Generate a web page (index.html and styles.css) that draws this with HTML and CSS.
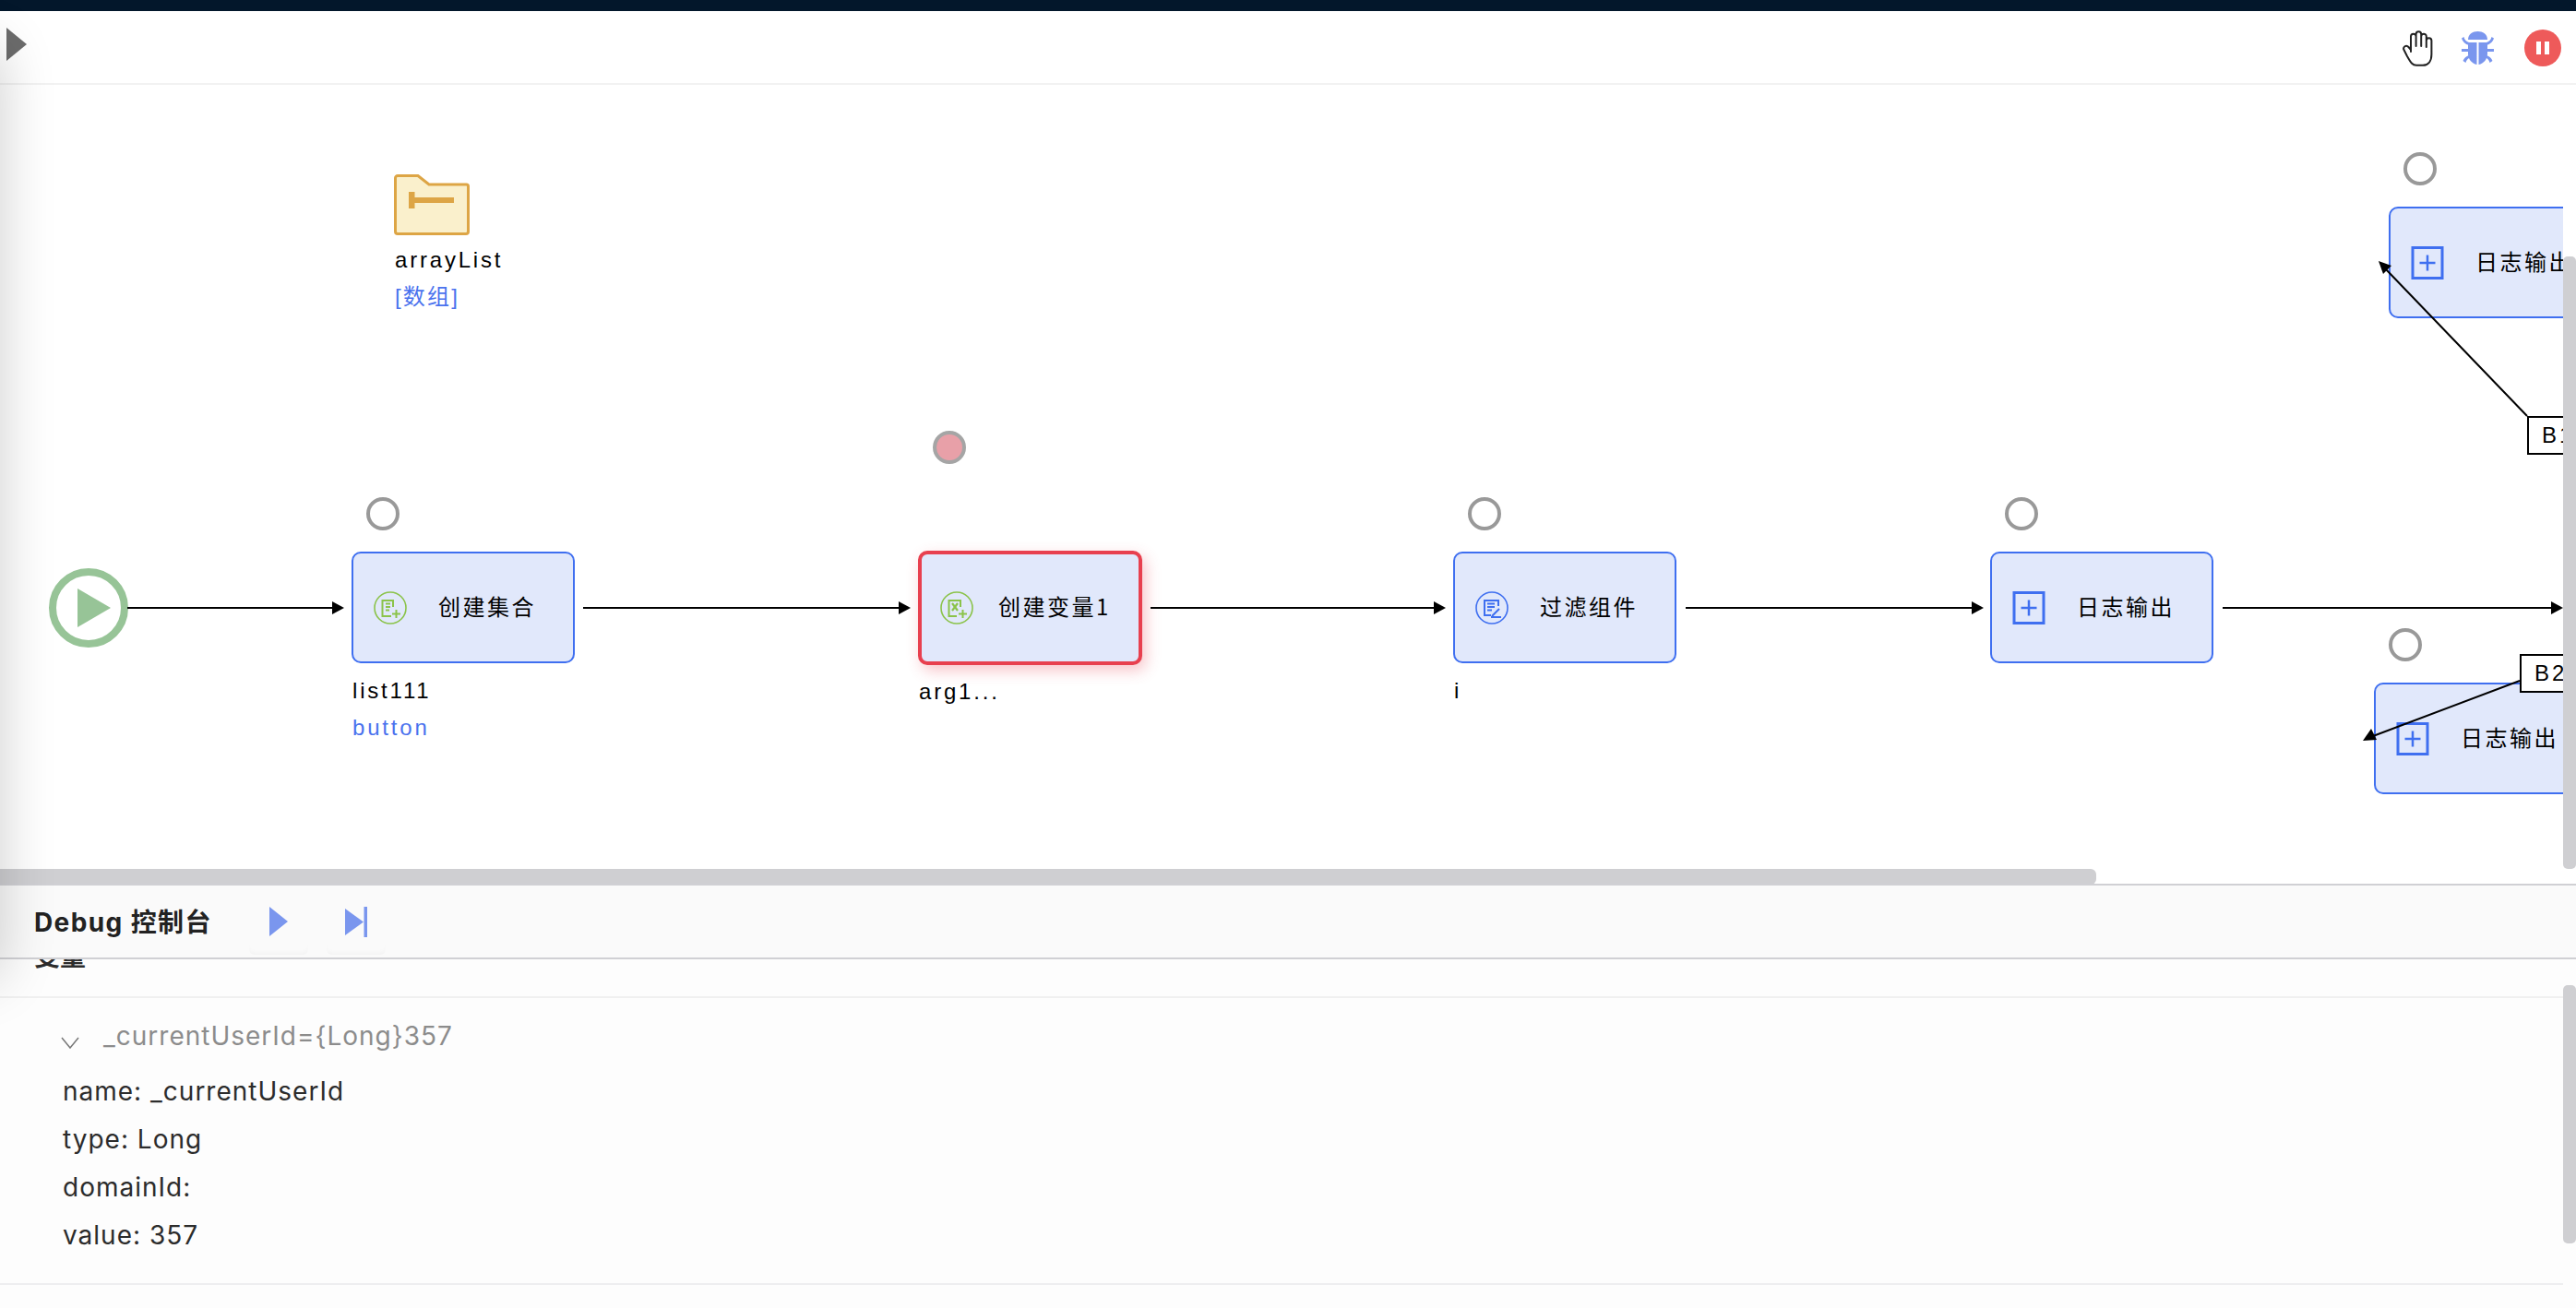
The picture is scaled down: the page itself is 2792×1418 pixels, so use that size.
FILE: index.html
```html
<!DOCTYPE html>
<html lang="zh">
<head>
<meta charset="utf-8">
<title>Debug</title>
<link rel="stylesheet" href="styles.css">
</head>
<body>
<div class="page">
  <div class="topbar"></div>
  <div class="toolbar">
    <svg class="tb-toggle" width="22" height="36" viewBox="0 0 22 36"><polygon points="0,0 22,18 0,36" fill="#6c6c6c"/></svg>
    <div class="tb-actions">
      <svg width="36" height="39" viewBox="0 0 36 39" fill="none" stroke="#222" stroke-width="2" stroke-linecap="round" stroke-linejoin="round"><path d="M9 23V6.5a2.8 2.8 0 0 1 5.6 0V17M14.6 17V4a2.8 2.8 0 0 1 5.6 0V17M20.2 17V6.5a2.8 2.8 0 0 1 5.6 0V18M25.8 18V11a2.8 2.8 0 0 1 5.6 0V26C31.4 33 28 37.8 22 37.8H15C10 37.8 8 33 5 28L1.5 21C0 18 4 15 6.5 18L9 21"/></svg>
      <svg width="40" height="36" viewBox="0 0 40 36" fill="#7a96ee"><path d="M7 9C7 3 12 0 17.500 0S28 3 28 9Z"/><path d="M7 12H16.500V36C11 35 7 30 7 24Z"/><path d="M18.500 12H28V24C28 30 24 35 18.500 36Z"/><path d="M0 7.500L2.500 6C3 9 5 11 8 12V15C4 14 1 11 0 7.500ZM35 7.500L32.500 6C32 9 30 11 27 12V15C31 14 34 11 35 7.500ZM0 19H8V22H0ZM27 19H35V22H27ZM8 26V29C6 30 5 32 4.500 34L1.500 32C2.500 29 5 27 8 26ZM27 26V29C29 30 30 32 30.500 34L33.500 32C32.500 29 30 27 27 26Z"/></svg>
      <div class="pause"><span class="pause-bar"></span><span class="pause-bar"></span></div>
    </div>
  </div>

  <div class="canvas-wrap">
    <div class="canvas">
      <div class="node n1">
        <svg class="nico" width="36" height="36" viewBox="-18 -18 36 36" fill="none" stroke="#8bc34a" stroke-width="2"><circle r="17" stroke-width="1.600"/><path d="M3-1V-8H-8.500V9H1"/><path d="M-5-4.500H0M-5-1H0M-5 2.500H-1"/><path d="M2 6.500H11M6.500 2V11"/></svg>
        <span class="ntext">创建集合</span>
      </div>
      <div class="node n2">
        <svg class="nico" width="36" height="36" viewBox="-18 -18 36 36" fill="none" stroke="#8bc34a" stroke-width="2"><circle r="17" stroke-width="1.600"/><path d="M4-1V-8H-8.500V9H0"/><path d="M-5-5L1 3M1-5L-5 3" stroke-width="2.200"/><path d="M2 6.500H11M6.500 2V11"/></svg>
        <span class="ntext">创建变量1</span>
      </div>
      <div class="node n3">
        <svg class="nico" width="36" height="36" viewBox="-18 -18 36 36" fill="none" stroke="#3f6ff0" stroke-width="2"><circle r="17" stroke-width="1.600"/><path d="M7-2V-8H-8V8H-1"/><path d="M-5-4.500H3M-5-1H3M-5 2.500H0"/><path d="M0 9L8 1M-1 10H10"/></svg>
        <span class="ntext">过滤组件</span>
      </div>
      <div class="node n4">
        <svg class="nico" width="36" height="36" viewBox="-18 -18 36 36" fill="none" stroke="#3f6ff0"><rect x="-16" y="-16.500" width="32" height="33" stroke-width="3"/><path d="M-8.500 0H8.500M0-8.500V8.500" stroke-width="2.500"/></svg>
        <span class="ntext">日志输出</span>
      </div>
      <div class="node n5">
        <svg class="nico" width="36" height="36" viewBox="-18 -18 36 36" fill="none" stroke="#3f6ff0"><rect x="-16" y="-16.500" width="32" height="33" stroke-width="3"/><path d="M-8.500 0H8.500M0-8.500V8.500" stroke-width="2.500"/></svg>
        <span class="ntext">日志输出</span>
      </div>
      <div class="node n6">
        <svg class="nico" width="36" height="36" viewBox="-18 -18 36 36" fill="none" stroke="#3f6ff0"><rect x="-16" y="-16.500" width="32" height="33" stroke-width="3"/><path d="M-8.500 0H8.500M0-8.500V8.500" stroke-width="2.500"/></svg>
        <span class="ntext">日志输出</span>
      </div>

      <svg class="edges" width="2778" height="866" viewBox="0 92 2778 866">
        <!-- folder -->
        <g transform="translate(427 189)">
          <path d="M1.500 4A2.500 2.500 0 0 1 4 1.500H26L38 11H78.500A2 2 0 0 1 80.500 13V62A2.500 2.500 0 0 1 78 64.500H4A2.500 2.500 0 0 1 1.500 62Z" fill="#faf0cc" stroke="#dda545" stroke-width="3"/>
          <path d="M16 19H22.500V25H65V31H22.500V37H16Z" fill="#dda545"/>
        </g>
        <!-- start -->
        <circle cx="96" cy="659" r="39" fill="#fff" stroke="#97c497" stroke-width="8"/>
        <polygon points="84,638 120,659 84,680" fill="#97c497"/>
        <!-- breakpoints -->
        <g fill="none" stroke="#999" stroke-width="4">
          <circle cx="415" cy="557" r="16"/>
          <circle cx="1029" cy="485" r="16" fill="#e8a0a8" stroke="#a5a5a5"/>
          <circle cx="1609" cy="557" r="16"/>
          <circle cx="2191" cy="557" r="16"/>
          <circle cx="2623" cy="183" r="16"/>
          <circle cx="2607" cy="699" r="16"/>
        </g>
        <!-- edges -->
        <g stroke="#000" stroke-width="2" fill="none">
          <path d="M138 659H364M632 659H978M1247 659H1558M1827 659H2142M2409 659H2770"/>
          <path d="M2739 451L2586 292M2731 738L2572 798"/>
        </g>
        <g fill="#000">
          <polygon points="373,659 360,652 360,666"/>
          <polygon points="987,659 974,652 974,666"/>
          <polygon points="1567,659 1554,652 1554,666"/>
          <polygon points="2150,659 2137,652 2137,666"/>
          <polygon points="2778,659 2765,652 2765,666"/>
          <polygon points="2578,283 2592,288 2583,297"/>
          <polygon points="2561,803 2570,790 2576,802"/>
        </g>
      </svg>

      <span class="lbl l-array">arrayList</span>
      <span class="lbl lbl-blue l-arraytype">[数组]</span>
      <span class="lbl l-list">list111</span>
      <span class="lbl lbl-blue l-button">button</span>
      <span class="lbl l-arg">arg1...</span>
      <span class="lbl l-i">i</span>
      <span class="branch b1">B1</span>
      <span class="branch b2">B2</span>
    </div>
    <div class="sb-h"></div>
  </div>
  <div class="sb-v sb-v1"></div>

  <div class="debug">
    <div class="debug-head">
      <span class="debug-title">Debug 控制台</span>
      <div class="debug-btn"><svg width="20" height="32" viewBox="0 0 20 32"><polygon points="0,0 20,16 0,32" fill="#7a96ee"/></svg></div>
      <div class="debug-btn"><svg width="24" height="33" viewBox="0 0 24 33" fill="#7a96ee"><polygon points="0,2 20,16.500 0,31"/><rect x="20.500" width="3.500" height="33"/></svg></div>
    </div>
    <div class="section-head"><div class="section-title">变量</div></div>
    <div class="var">
      <div class="var-summary">
        <svg class="chev" width="20" height="13" viewBox="0 0 20 13" fill="none" stroke="#777" stroke-width="1.500"><path d="M1 1L10 12L19 1"/></svg>
        <span>_currentUserId={Long}357</span>
      </div>
      <div class="var-row">name: _currentUserId</div>
      <div class="var-row">type: Long</div>
      <div class="var-row">domainId:</div>
      <div class="var-row">value: 357</div>
    </div>
    <div class="sb-v sb-v2"></div>
  </div>
  <div class="edge-shade"></div>
</div>
</body>
</html>
```

FILE: styles.css
```css
* { box-sizing: border-box; }
html, body { margin: 0; padding: 0; background: #fff; }
.page {
  position: relative;
  width: 2792px;
  height: 1418px;
  overflow: hidden;
  display: flex;
  flex-direction: column;
  font-family: "Liberation Sans", "Noto Sans CJK SC", sans-serif;
}
.topbar { height: 12px; background: #03172b; flex: none; }
.toolbar {
  height: 80px;
  flex: none;
  display: flex;
  align-items: center;
  justify-content: space-between;
  padding: 0 16px 6px 7px;
  border-bottom: 2px solid #f2f2f2;
  background: #fff;
}
.tb-actions { display: flex; align-items: center; gap: 28px; margin-top: 8px; }
.pause {
  width: 40px;
  height: 40px;
  border-radius: 50%;
  background: #ee5a5a;
  display: flex;
  align-items: center;
  justify-content: center;
  gap: 4px;
}
.pause-bar { width: 5px; height: 14px; background: #fff; }

.canvas-wrap { position: relative; height: 866px; flex: none; overflow: hidden; }
.canvas { position: relative; width: 2778px; height: 866px; overflow: hidden; }
.edges { position: absolute; left: 0; top: 0; z-index: 2; }

.node {
  position: absolute;
  width: 242px;
  height: 121px;
  display: flex;
  align-items: center;
  background: #e1e8fb;
  border: 2px solid #3f6ff0;
  border-radius: 10px;
  padding-left: 22px;
  z-index: 1;
}
.nico { flex: none; margin-right: 34px; }
.ntext {
  font-family: "Noto Sans CJK SC", "Liberation Sans", sans-serif;
  font-size: 24px;
  letter-spacing: 2.500px;
  color: #000;
  white-space: nowrap;
  line-height: 1;
  margin-top: -4px;
}
.n1 { left: 381px; top: 506px; }
.n2 {
  left: 995px; top: 505px; width: 243px; height: 124px;
  border: 4px solid #e8404f;
  padding-left: 20px;
  box-shadow: 4px 6px 16px rgba(232, 64, 79, .3);
}
.n2 .nico { margin-right: 27px; }
.n3 { left: 1575px; top: 506px; }
.n4 { left: 2157px; top: 506px; }
.n5 { left: 2589px; top: 132px; }
.n6 { left: 2573px; top: 648px; }

.lbl {
  position: absolute;
  z-index: 3;
  font-size: 24px;
  line-height: 30px;
  letter-spacing: 2.800px;
  color: #000;
  white-space: nowrap;
}
.lbl-blue { color: #4a72ee; }
.l-array { left: 428px; top: 175px; }
.l-arraytype { left: 428px; top: 215px; letter-spacing: 2.200px; }
.l-list { left: 382px; top: 642px; }
.l-button { left: 382px; top: 682px; }
.l-arg { left: 996px; top: 643px; }
.l-i { left: 1576px; top: 642px; }

.branch {
  position: absolute;
  z-index: 3;
  width: 60px;
  height: 42px;
  background: #fff;
  border: 2px solid #000;
  font-size: 24px;
  line-height: 38px;
  letter-spacing: 3px;
  padding-left: 14px;
  color: #000;
}
.b1 { left: 2739px; top: 359px; }
.b2 { left: 2731px; top: 617px; }

.sb-h {
  position: absolute;
  left: -6px;
  top: 850px;
  width: 2278px;
  height: 17px;
  background: #cfcfd2;
  border-radius: 6px;
  z-index: 4;
}
.sb-v { position: absolute; right: 0; width: 14px; background: #cfcfd2; border-radius: 5px; z-index: 5; }
.sb-v1 { top: 278px; height: 664px; }
.sb-v2 { top: 110px; height: 280px; }

.debug {
  position: relative;
  flex: 1;
  background: #fdfdfd;
  font-family: Inter, "Noto Sans CJK SC", sans-serif;
  color: #2c2c2c;
  overflow: hidden;
}
.debug-head {
  position: relative;
  z-index: 2;
  height: 82px;
  display: flex;
  align-items: center;
  padding-left: 37px;
  background: #fafafa;
  border-top: 2px solid #d0d0d4;
  border-bottom: 2px solid #d0d0d4;
}
.debug-title { font-size: 28px; font-weight: 700; letter-spacing: 1.400px; color: #222; width: 233px; white-space: nowrap; margin-top: -2px; }
.debug-btn {
  width: 64px;
  height: 72px;
  margin-right: 20px;
  display: flex;
  align-items: center;
  justify-content: center;
  border-radius: 0 0 6px 6px;
  box-shadow: inset 0 -5px 4px -3px #f3f3f3;
}
.section-head {
  width: 2778px;
  height: 42px;
  overflow: hidden;
  padding-left: 37px;
  border-bottom: 2px solid #f0f0f0;
}
.section-title {
  margin-top: -23px;
  font-size: 28px;
  font-weight: 700;
  line-height: 40px;
}
.var {
  width: 2778px;
  padding: 15px 0 26px 68px;
  border-bottom: 2px solid #eeeef0;
}
.var-summary {
  position: relative;
  height: 52px;
  margin-bottom: 8px;
  padding-left: 44px;
  font-size: 28px;
  line-height: 52px;
  letter-spacing: 1px;
  color: #8c8c8c;
  white-space: nowrap;
}
.chev { position: absolute; left: -2px; top: 27px; }
.var-row { height: 52px; font-size: 28px; line-height: 52px; letter-spacing: 1px; white-space: nowrap; }

.edge-shade {
  position: absolute;
  left: -60px;
  top: 50px;
  width: 60px;
  height: 1010px;
  box-shadow: 0 0 60px rgba(0, 0, 0, .2);
  z-index: 10;
  pointer-events: none;
}
```
